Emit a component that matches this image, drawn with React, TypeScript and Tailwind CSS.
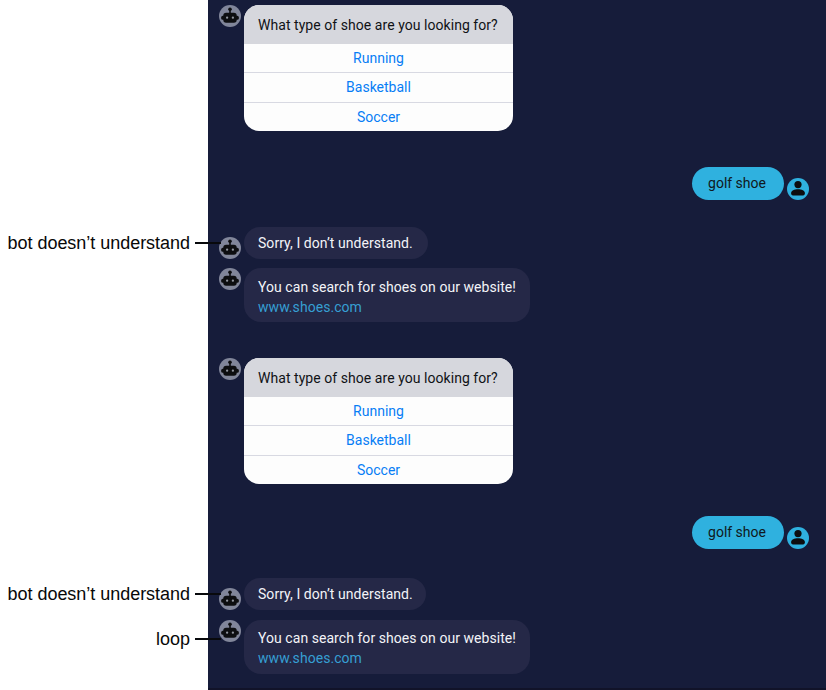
import type { ReactNode } from "react";

function BotAvatar() {
  return (
    <svg viewBox="0 0 22 22" className="h-[22px] w-[22px] shrink-0" aria-hidden="true">
      <circle cx="11" cy="11" r="11" fill="#81869a" />
      <circle cx="11" cy="4.2" r="1.8" fill="#0d0e10" />
      <rect x="10.2" y="4" width="1.6" height="5" fill="#0d0e10" />
      <rect x="4.3" y="7.8" width="13.4" height="10" rx="2.8" fill="#0d0e10" />
      <rect x="2.2" y="10.8" width="17.6" height="4" rx="1.5" fill="#0d0e10" />
      <circle cx="8.1" cy="12.7" r="1.15" fill="#92969f" />
      <circle cx="13.9" cy="12.7" r="1.15" fill="#92969f" />
    </svg>
  );
}

function UserAvatar() {
  return (
    <svg viewBox="0 0 22 22" className="h-[22px] w-[22px] shrink-0" aria-hidden="true">
      <circle cx="11" cy="11" r="11" fill="#2fb1df" />
      <circle cx="11" cy="6.6" r="3.6" fill="#0d0e10" />
      <path d="M4.1 15c0-2.4 3.2-3.8 6.9-3.8s6.9 1.4 6.9 3.8v.6c0 1-.7 1.8-1.9 1.8H6c-1.2 0-1.9-.8-1.9-1.8Z" fill="#0d0e10" />
    </svg>
  );
}

function QuestionCard() {
  return (
    <div className="flex items-start gap-[3px]">
      <BotAvatar />
      <div className="h-[126px] w-[269px] overflow-hidden rounded-[15px] bg-[#fdfdfd]">
        <div className="flex h-[38.5px] items-center bg-[#d6d7dd] pt-[2px] pl-[14px] tracking-[0.05px] text-[#101216]">
          What type of shoe are you looking for?
        </div>
        <div className="divide-y divide-[#d8d9e2] text-center leading-[28.5px] text-[#087df5]">
          <div>Running</div>
          <div>Basketball</div>
          <div>Soccer</div>
        </div>
      </div>
    </div>
  );
}

function UserMessage() {
  return (
    <div className="mr-[17px] flex items-end justify-end gap-[3px]">
      <div className="flex h-[33px] w-[92px] items-center justify-center rounded-full bg-[#2fb1df] pr-[2px] text-[#101820]">
        golf shoe
      </div>
      <UserAvatar />
    </div>
  );
}

function SorryMessage({ className }: { className: string }) {
  return (
    <div className="flex items-end gap-[3px]">
      <BotAvatar />
      <div className={`flex h-8 items-center rounded-2xl bg-[#252847] pl-[14px] tracking-[0.05px] text-[#f3f4f8] ${className}`}>
        Sorry, I don’t understand.
      </div>
    </div>
  );
}

function WebsiteMessage({ className }: { className: string }) {
  return (
    <div className="flex items-start gap-[3px]">
      <BotAvatar />
      <div className={`h-[54px] w-[286px] rounded-[17px] bg-[#252847] pl-[14px] leading-5 tracking-[0.05px] text-[#f3f4f8] ${className}`}>
        <div>You can search for shoes on our website!</div>
        <div className="text-[#369fd3]">www.shoes.com</div>
      </div>
    </div>
  );
}

function Note({ children }: { children: ReactNode }) {
  return (
    <div className="flex h-6 items-center justify-end gap-[5px]">
      <span>{children}</span>
      <span className="-mr-[13px] h-[1.5px] w-[26px] shrink-0 bg-[#08090c]" />
    </div>
  );
}

export default function App() {
  return (
    <div className="flex h-[690px] w-[826px] overflow-hidden bg-white">
      <aside className="z-10 flex w-52 shrink-0 flex-col pt-[231px] font-['Liberation_Sans',sans-serif] text-[18px] leading-6 tracking-[-0.03px] whitespace-nowrap text-[#080808]">
        <Note>bot doesn’t understand</Note>
        <div className="h-[327px]" />
        <Note>bot doesn’t understand</Note>
        <div className="h-[21px]" />
        <Note>loop</Note>
      </aside>
      <main className="flex w-[618px] flex-col border-b-2 border-[#111329] bg-[#161c3a] pt-[5px] pl-[11px] font-[Roboto,sans-serif] text-[14px] whitespace-nowrap">
        <QuestionCard />
        <div className="mt-[36px]"><UserMessage /></div>
        <div className="mt-[27px]"><SorryMessage className="w-[184px]" /></div>
        <div className="mt-[9px]"><WebsiteMessage className="pt-[9px]" /></div>
        <div className="mt-[36px]"><QuestionCard /></div>
        <div className="mt-[32px]"><UserMessage /></div>
        <div className="mt-[29px]"><SorryMessage className="w-[182px]" /></div>
        <div className="mt-[10px]"><WebsiteMessage className="pt-[8px]" /></div>
      </main>
    </div>
  );
}
